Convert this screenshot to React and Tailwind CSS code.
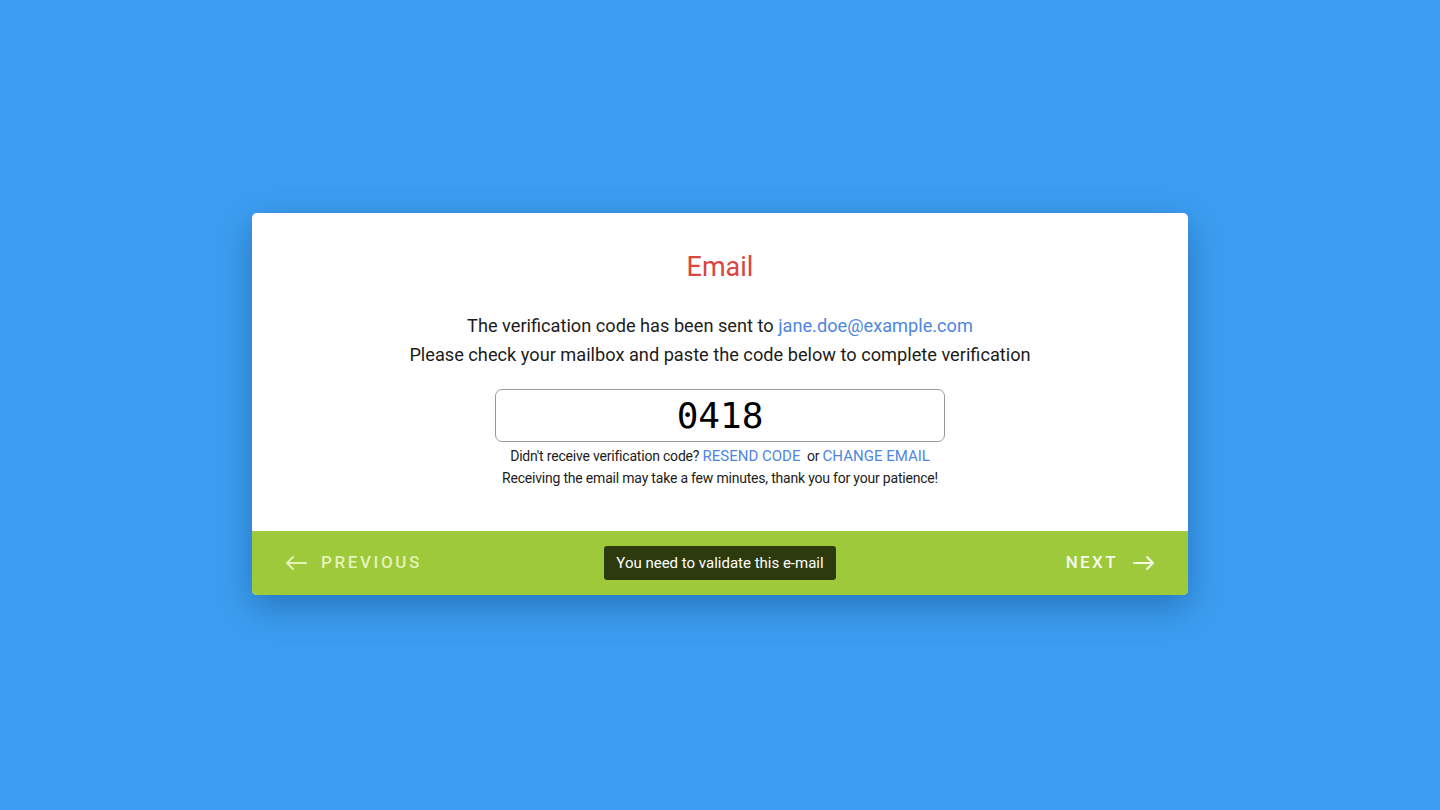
import React from "react";

const Arrow = ({ left }) => (
  <svg width="22" height="16" viewBox="0 0 22 16" fill="none" stroke="currentColor" strokeWidth="2" strokeLinecap="round" strokeLinejoin="round">
    {left ? (
      <path d="M21 8H2M8 2L2 8l6 6" />
    ) : (
      <path d="M1 8h19M14 2l6 6-6 6" />
    )}
  </svg>
);

const App = () => {
  return (
    <div className="h-screen w-full bg-[#3c9ef1] flex items-center justify-center font-['Roboto',sans-serif]">
      <div className="w-[936px] mt-[-2px] bg-white rounded-[5px] overflow-hidden shadow-[0_12px_36px_rgba(0,40,90,0.35)]">
        <div className="flex flex-col items-center pt-[34px] pb-[43px]">
          <h1 className="text-[27px] leading-[40px] text-[#d9463f]">Email</h1>
          <div className="mt-[24px] text-[18.2px] leading-[29px] text-[#1c1c1c] text-center">
            <p>
              The verification code has been sent to{" "}
              <span className="text-[#4f86dd]">jane.doe@example.com</span>
            </p>
            <p>Please check your mailbox and paste the code below to complete verification</p>
          </div>
          <div className="mt-[20px] w-[450px] h-[53px] border border-[#9a9a9a] rounded-[7px] flex items-center justify-center">
            <span className="font-['DejaVu_Sans_Mono',monospace] text-[36px] text-black">0418</span>
          </div>
          <p className="mt-[4px] text-[14px] leading-[20px] text-[#1c1c1c] tracking-[-0.2px]">
            Didn't receive verification code?{" "}
            <span className="text-[#4f86dd] text-[15px] tracking-normal">RESEND CODE</span>
            &nbsp; or{" "}
            <span className="text-[#4f86dd] text-[15px] tracking-normal">CHANGE EMAIL</span>
          </p>
          <p className="mt-[2px] text-[14px] leading-[20px] text-[#1c1c1c] tracking-[-0.2px]">
            Receiving the email may take a few minutes, thank you for your patience!
          </p>
        </div>
        <div className="h-[64px] bg-[#9dc93b] grid grid-cols-3 items-center px-[33px]">
          <button className="justify-self-start flex items-center gap-[14px] text-[#e4f3b8] text-[17px] font-medium tracking-[2.6px]">
            <Arrow left />
            PREVIOUS
          </button>
          <div className="justify-self-center bg-[#2c3a0e] text-white text-[15px] px-[12px] h-[34px] flex items-center rounded-[3px] whitespace-nowrap">
            You need to validate this e-mail
          </div>
          <button className="justify-self-end flex items-center gap-[15px] text-[#f6fbe9] text-[17px] font-medium tracking-[2.4px]">
            NEXT
            <Arrow />
          </button>
        </div>
      </div>
    </div>
  );
};

export default App;
